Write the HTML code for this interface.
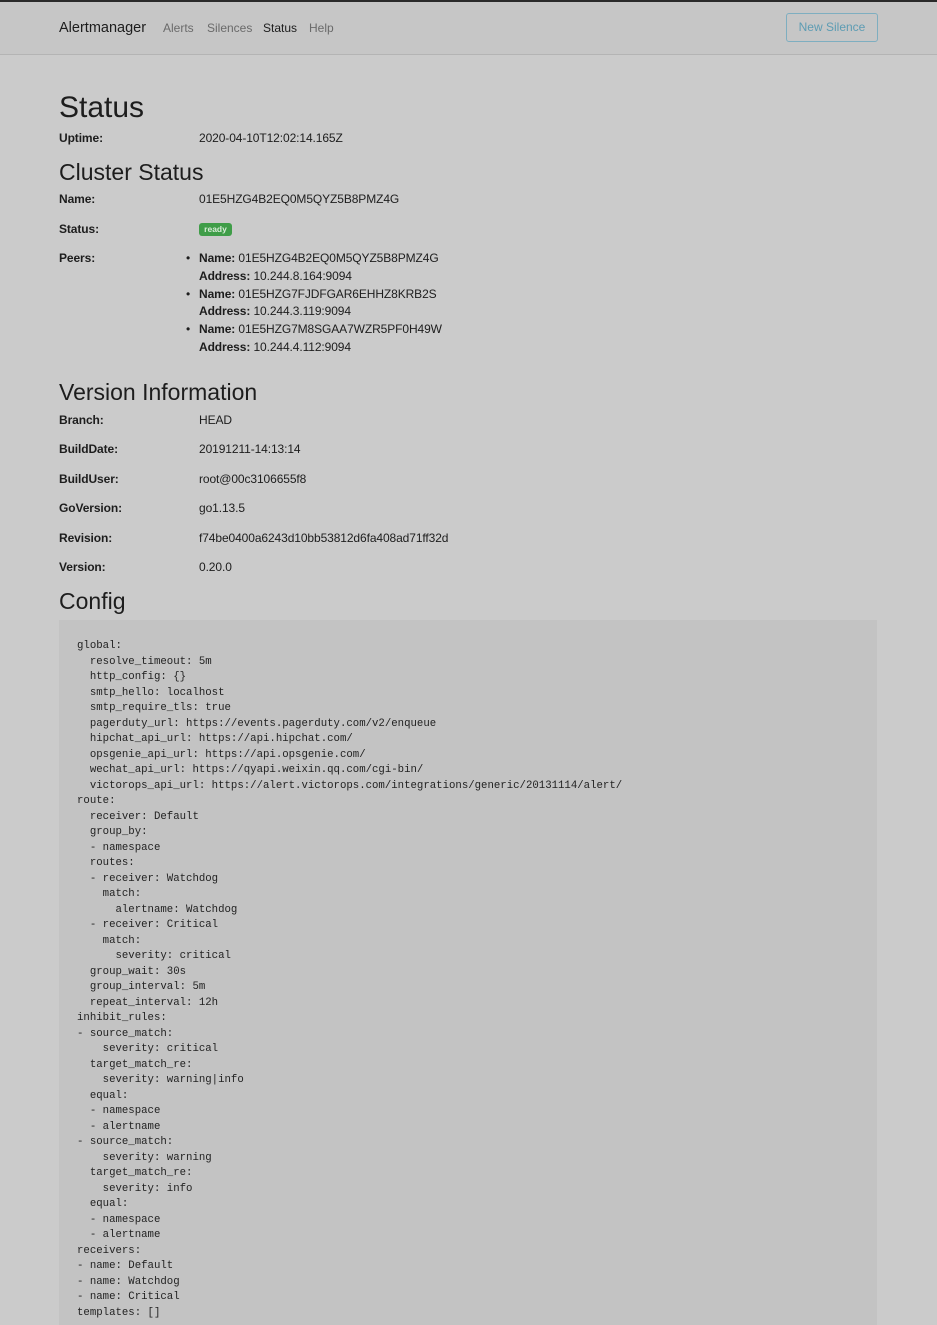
<!DOCTYPE html>
<html><head><meta charset="utf-8"><style>
html,body{margin:0;height:1325px;overflow:hidden}
body{width:937px;background:#cbcbcb;font-family:"Liberation Sans",sans-serif;color:#1d1d1d;position:relative}
.top{position:absolute;left:0;top:0;width:937px;height:2px;background:#2a2a2a}
.nav{position:absolute;left:0;top:2px;width:937px;height:52px;background:#c6c6c6;border-bottom:1px solid #b4b4b4}
.a{position:absolute;top:50%;transform:translateY(-50%);font-size:12px;color:#6a6a6a}
.btn{position:absolute;left:786px;top:11px;width:90px;height:27px;border:1px solid #7eaec0;border-radius:3px;color:#5d9cb3;font-size:12px;text-align:center;line-height:27px}
.t{position:absolute;white-space:nowrap;font-size:12px;letter-spacing:-0.1px}
.l{left:59px;font-weight:bold}
.v{left:199px}
h1,h2{position:absolute;margin:0;font-weight:normal;left:59px;white-space:nowrap}
h1{font-size:30px}h2{font-size:23px}
.badge{position:absolute;left:199px;top:223px;width:33px;height:13px;background:#3f9d48;border-radius:3px;color:#d8ecd8;font-size:8.5px;font-weight:bold;text-align:center;line-height:13px}
pre{position:absolute;left:59px;top:620px;width:818px;height:705px;margin:0;background:#c3c3c3;padding:19px 0 0 18px;box-sizing:border-box;font-family:"Liberation Mono",monospace;font-size:10.7px;line-height:15.5px;color:#222;overflow:hidden}
.dot{position:absolute;left:186px;font-size:12px}
</style></head><body>
<div class="top"></div>
<div class="nav">
<span class="a" style="left:59px;font-size:14.5px;color:#1d1d1d">Alertmanager</span>
<span class="a" style="left:163px">Alerts</span>
<span class="a" style="left:207px">Silences</span>
<span class="a" style="left:263px;color:#1d1d1d">Status</span>
<span class="a" style="left:309px">Help</span>
<div class="btn">New Silence</div>
</div>
<h1 style="top:91px">Status</h1>
<div class="t l" style="top:131px">Uptime:</div><div class="t v" style="top:131px">2020-04-10T12:02:14.165Z</div>
<h2 style="top:159px">Cluster Status</h2>
<div class="t l" style="top:192px">Name:</div><div class="t v" style="top:192px">01E5HZG4B2EQ0M5QYZ5B8PMZ4G</div>
<div class="t l" style="top:222px">Status:</div><div class="badge">ready</div>
<div class="t l" style="top:251px">Peers:</div>
<div class="dot" style="top:251px">•</div><div class="t v" style="top:251px"><b>Name:</b> 01E5HZG4B2EQ0M5QYZ5B8PMZ4G</div>
<div class="t v" style="top:269px"><b>Address:</b> 10.244.8.164:9094</div>
<div class="dot" style="top:287px">•</div><div class="t v" style="top:287px"><b>Name:</b> 01E5HZG7FJDFGAR6EHHZ8KRB2S</div>
<div class="t v" style="top:304px"><b>Address:</b> 10.244.3.119:9094</div>
<div class="dot" style="top:322px">•</div><div class="t v" style="top:322px"><b>Name:</b> 01E5HZG7M8SGAA7WZR5PF0H49W</div>
<div class="t v" style="top:340px"><b>Address:</b> 10.244.4.112:9094</div>
<h2 style="top:379px">Version Information</h2>
<div class="t l" style="top:413px">Branch:</div><div class="t v" style="top:413px">HEAD</div>
<div class="t l" style="top:442px">BuildDate:</div><div class="t v" style="top:442px">20191211-14:13:14</div>
<div class="t l" style="top:472px">BuildUser:</div><div class="t v" style="top:472px">root@00c3106655f8</div>
<div class="t l" style="top:501px">GoVersion:</div><div class="t v" style="top:501px">go1.13.5</div>
<div class="t l" style="top:531px">Revision:</div><div class="t v" style="top:531px">f74be0400a6243d10bb53812d6fa408ad71ff32d</div>
<div class="t l" style="top:560px">Version:</div><div class="t v" style="top:560px">0.20.0</div>
<h2 style="top:588px">Config</h2>
<pre>global:
  resolve_timeout: 5m
  http_config: {}
  smtp_hello: localhost
  smtp_require_tls: true
  pagerduty_url: https://events.pagerduty.com/v2/enqueue
  hipchat_api_url: https://api.hipchat.com/
  opsgenie_api_url: https://api.opsgenie.com/
  wechat_api_url: https://qyapi.weixin.qq.com/cgi-bin/
  victorops_api_url: https://alert.victorops.com/integrations/generic/20131114/alert/
route:
  receiver: Default
  group_by:
  - namespace
  routes:
  - receiver: Watchdog
    match:
      alertname: Watchdog
  - receiver: Critical
    match:
      severity: critical
  group_wait: 30s
  group_interval: 5m
  repeat_interval: 12h
inhibit_rules:
- source_match:
    severity: critical
  target_match_re:
    severity: warning|info
  equal:
  - namespace
  - alertname
- source_match:
    severity: warning
  target_match_re:
    severity: info
  equal:
  - namespace
  - alertname
receivers:
- name: Default
- name: Watchdog
- name: Critical
templates: []</pre>
</body></html>
